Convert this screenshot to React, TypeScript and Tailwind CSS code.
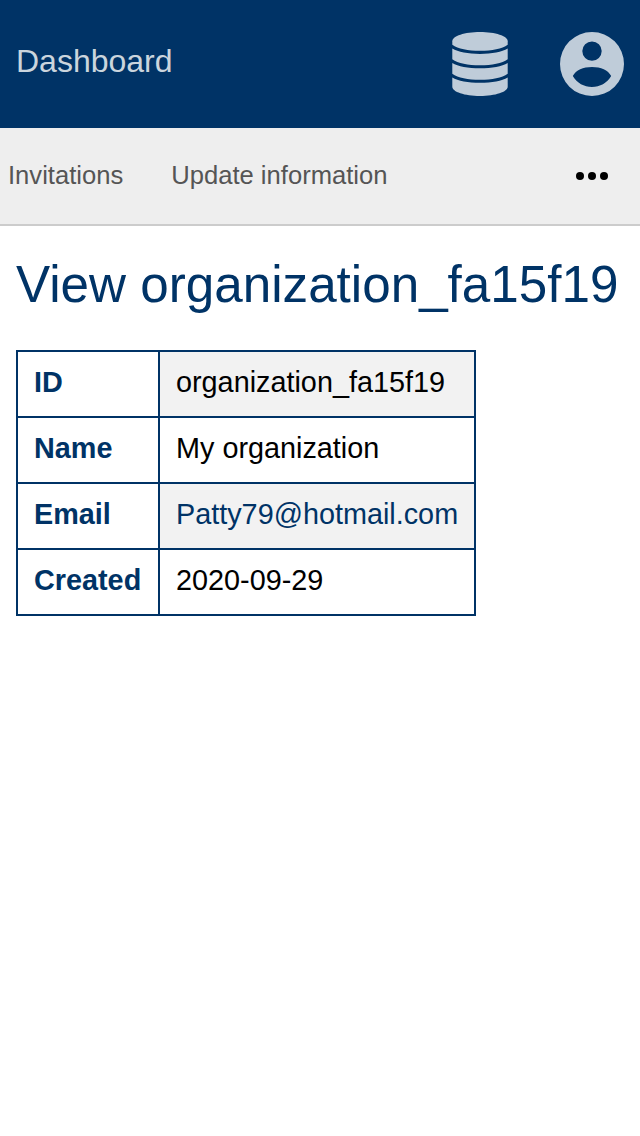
import React from "react";

const rows: { label: string; value: string; link?: boolean }[] = [
  { label: "ID", value: "organization_fa15f19" },
  { label: "Name", value: "My organization" },
  { label: "Email", value: "Patty79@hotmail.com", link: true },
  { label: "Created", value: "2020-09-29" },
];

function DatabaseIcon() {
  return (
    <svg className="h-16 w-14" viewBox="0 0 56 64" fill="currentColor" aria-hidden="true">
      <path d="M.3 9.2C.3 4.100 12.700 0 28 0S55.700 4.100 55.700 9.200V12.800C50 16.800 40 18.800 28 18.800S6 16.800.3 12.800Z" />
      <path d="M.3 16.600C6 20 16 21.900 28 21.900S50 20 55.700 16.600V27.200C50 31.200 40 33.200 28 33.200S6 31.200.3 27.200Z" />
      <path d="M.3 31C6 34.400 16 36.300 28 36.300S50 34.400 55.700 31V41.700C50 45.700 40 47.700 28 47.700S6 45.700.3 41.700Z" />
      <path d="M.3 45.500C6 48.900 16 50.800 28 50.800S50 48.900 55.700 45.500V54.800C55.700 59.900 43.300 64 28 64S.3 59.900.3 54.800Z" />
    </svg>
  );
}

function AccountIcon() {
  return (
    <svg className="h-16 w-16" viewBox="0 0 64 64" fill="currentColor" aria-hidden="true">
      <path
        fillRule="evenodd"
        d="M32 0a32 32 0 1 0 0 64a32 32 0 1 0 0-64zM32 9.400a9.700 9.700 0 1 1 0 19.400a9.700 9.700 0 1 1 0-19.400zM12.800 44C16 38 23 35 32 35S48 38 51.200 44C47 51 40 55 32 55S17 51 12.800 44z"
      />
    </svg>
  );
}

export default function App() {
  return (
    <div className="min-h-screen bg-white font-['Liberation_Sans',Arial,sans-serif] text-black">
      <header className="flex h-32 items-center justify-between bg-[#003366] px-4 text-[#bfccd9]">
        <a className="pb-1.5 text-[32px] leading-9 text-[#cbd5dd]">Dashboard</a>
        <div className="flex items-center gap-[52px]">
          <DatabaseIcon />
          <AccountIcon />
        </div>
      </header>
      <nav className="flex h-[98px] items-center border-b-2 border-[#cccccc] bg-[#eeeeee] pr-8 pl-2 text-[25.6px] text-[#555555]">
        <a className="pb-0.5">Invitations</a>
        <a className="ml-12 pb-0.5">Update information</a>
        <svg className="ml-auto h-2 w-8" viewBox="0 0 32 8" fill="black" aria-hidden="true">
          <circle cx="4" cy="4" r="4" />
          <circle cx="16" cy="4" r="4" />
          <circle cx="28" cy="4" r="4" />
        </svg>
      </nav>
      <main className="px-4 pt-[30px]">
        <h1 className="text-[51.2px] leading-[57px] whitespace-nowrap text-[#003366]">View organization_fa15f19</h1>
        <table className="mt-[37px] border-collapse text-[28.8px] leading-8">
          <tbody>
            {rows.map((row) => (
              <tr key={row.label} className="group h-[66px]">
                <th className="w-[142px] border-2 border-[#003366] px-4 pt-0 pb-1 text-left font-bold text-[#003366]">{row.label}</th>
                <td className="border-2 border-[#003366] px-4 pt-0 pb-1 group-odd:bg-[#f2f2f2]">
                  {row.link ? <a className="text-[#003366]">{row.value}</a> : row.value}
                </td>
              </tr>
            ))}
          </tbody>
        </table>
      </main>
    </div>
  );
}
